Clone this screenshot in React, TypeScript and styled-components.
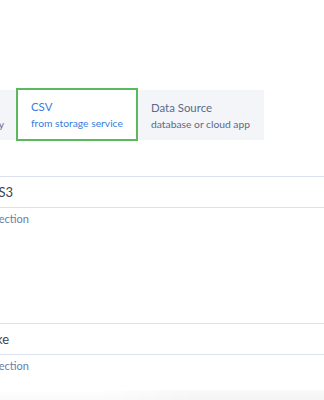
import React from 'react';
import styled, { createGlobalStyle } from 'styled-components';

const Global = createGlobalStyle`
  html, body {
    margin: 0;
    padding: 0;
    background: #ffffff;
    font-family: Lato, "Noto Sans", sans-serif;
    overflow: hidden;
  }
`;

const Page = styled.div`
  position: relative;
  width: 324px;
  height: 400px;
  overflow: hidden;
  padding-top: 90px;
  box-sizing: border-box;
`;

const Strip = styled.div`
  display: grid;
  grid-template-columns: 16px 122px 126px;
  width: 264px;
  height: 50px;
  background: #f3f5f9;
`;

const Tab = styled.div<{ $active?: boolean; $clip?: boolean }>`
  display: flex;
  align-items: center;
  justify-content: ${({ $clip }) => ($clip ? 'flex-end' : 'flex-start')};
  overflow: hidden;
  white-space: nowrap;
  box-sizing: border-box;
  padding: ${({ $clip }) => ($clip ? '1px 12px 0 0' : '1px 0 0 13px')};
  background: ${({ $active }) => ($active ? '#ffffff' : 'transparent')};
  border: ${({ $active }) => ($active ? '2px solid #5cb85c' : 'none')};
  margin: ${({ $active }) => ($active ? '-2px 0 -1px 0' : '0')};
  color: ${({ $active }) => ($active ? '#3a7be0' : '#5b6a8a')};
`;

const TabText = styled.div`
  display: flex;
  flex-direction: column;
  flex-shrink: 0;
`;

const TabTitle = styled.div`
  font-size: 11.4px;
  line-height: 15px;
`;

const TabSub = styled.div`
  font-size: 10.3px;
  line-height: 15px;
  margin-top: 2px;
`;

const List = styled.div`
  margin-top: 36px;
`;

const Section = styled.div<{ $gap: number }>`
  margin-bottom: ${({ $gap }) => $gap}px;
`;

const Row = styled.div<{ $h: number }>`
  display: flex;
  align-items: center;
  height: ${({ $h }) => $h}px;
  border-top: 1px solid #dde3ee;
`;

const Desc = styled.div`
  display: flex;
  align-items: center;
  height: 20px;
`;

const Clip = styled.div<{ $w: number }>`
  display: flex;
  justify-content: flex-end;
  width: ${({ $w }) => $w}px;
  overflow: hidden;
  white-space: nowrap;
`;

const Name = styled.span`
  font-size: 13px;
  color: #3d4352;
`;

const Hint = styled.span`
  font-size: 11px;
  color: #6a7ea5;
`;

const Fade = styled.div`
  position: absolute;
  left: 0;
  right: 0;
  bottom: 0;
  height: 10px;
  background: linear-gradient(90deg, rgba(255,255,255,0) 30%, rgba(0,0,0,0.025) 60%),
    linear-gradient(rgba(255,255,255,0), rgba(0,0,0,0.02));
`;

export default function App() {
  return (
    <Page>
      <Global />
      <Strip>
        <Tab $clip>
          <TabText>
            <TabTitle>File</TabTitle>
            <TabSub>from your library</TabSub>
          </TabText>
        </Tab>
        <Tab $active>
          <TabText>
            <TabTitle>CSV</TabTitle>
            <TabSub>from storage service</TabSub>
          </TabText>
        </Tab>
        <Tab>
          <TabText>
            <TabTitle>Data Source</TabTitle>
            <TabSub>database or cloud app</TabSub>
          </TabText>
        </Tab>
      </Strip>
      <List>
        <Section $gap={95}>
          <Row $h={30}>
            <Clip $w={13}>
              <Name>Amazon S3</Name>
            </Clip>
          </Row>
          <Row $h={0} />
          <Desc>
            <Clip $w={29}>
              <Hint>Select connection</Hint>
            </Clip>
          </Desc>
        </Section>
        <Section $gap={0}>
          <Row $h={30}>
            <Clip $w={9}>
              <Name>Snowflake</Name>
            </Clip>
          </Row>
          <Row $h={0} />
          <Desc>
            <Clip $w={29}>
              <Hint>Select connection</Hint>
            </Clip>
          </Desc>
        </Section>
      </List>
      <Fade />
    </Page>
  );
}
